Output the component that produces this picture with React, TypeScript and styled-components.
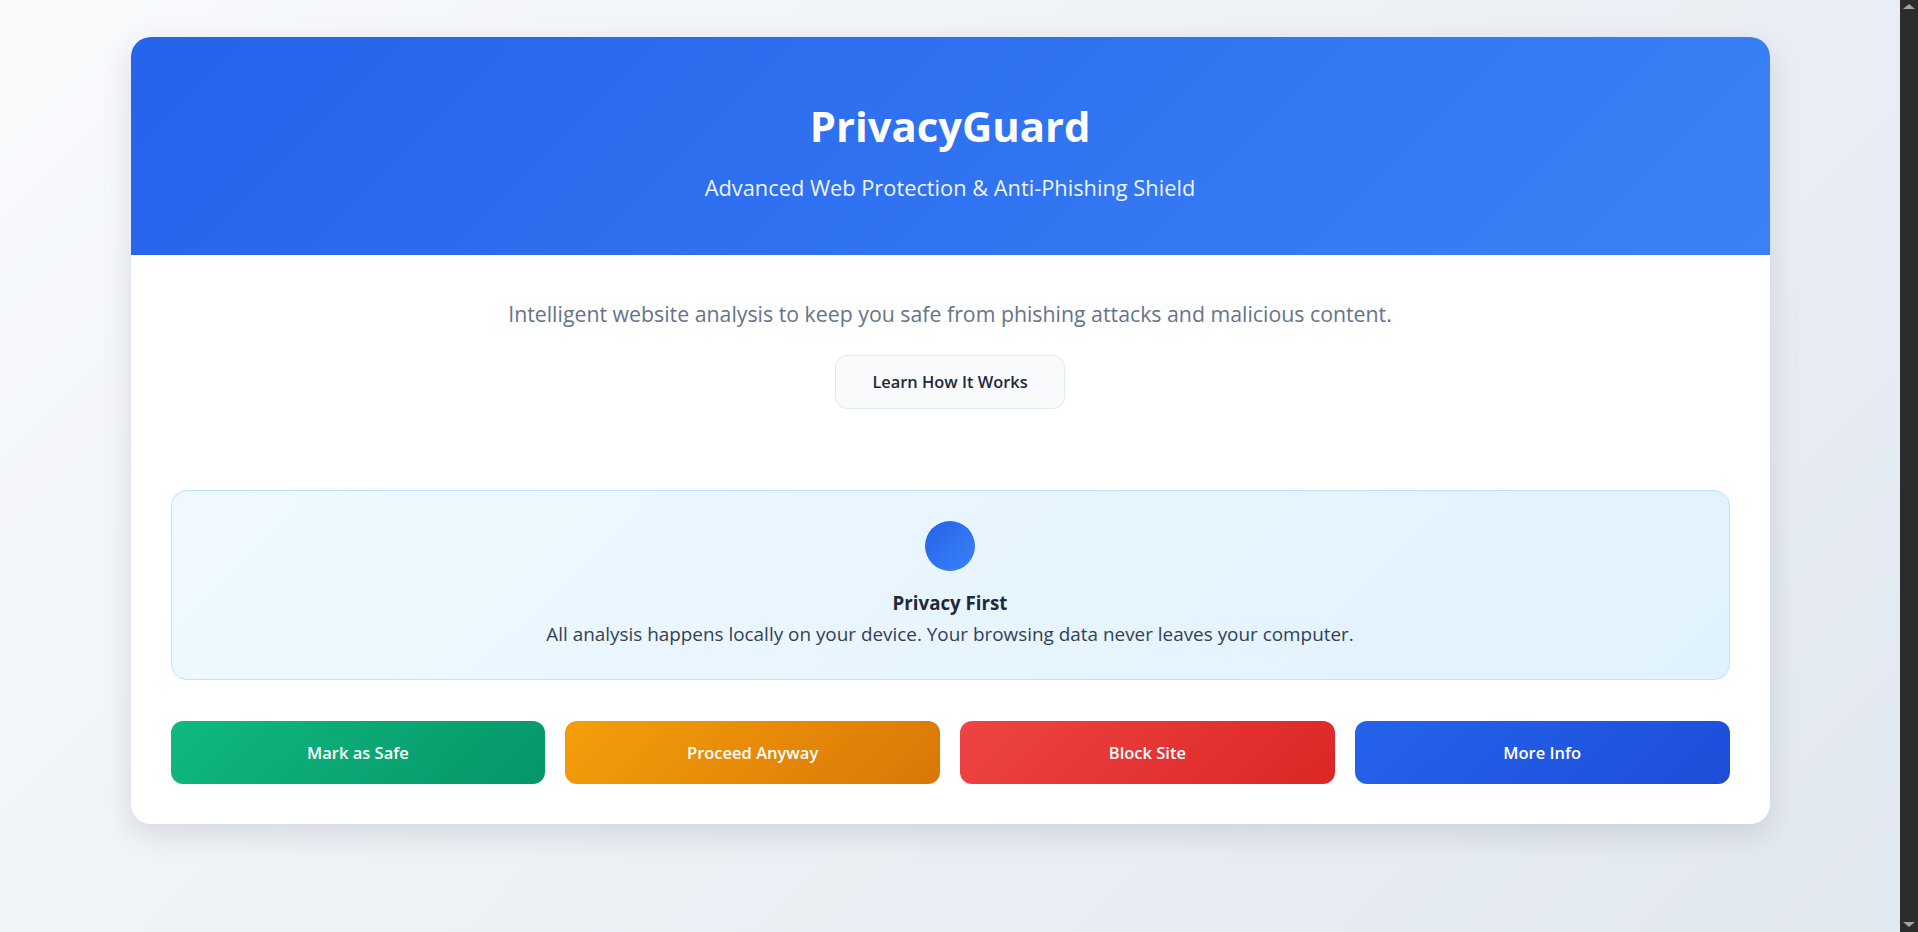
import styled, { createGlobalStyle } from "styled-components";

const GlobalStyle = createGlobalStyle`
  * {
    box-sizing: border-box;
  }
  body {
    margin: 0;
    font-family: "Open Sans", "Noto Sans", sans-serif;
    background: #e2e8f0;
    color: #1e293b;
    overflow: hidden;
  }
`;

const Viewport = styled.div`
  display: flex;
  height: 100vh;
`;

const Page = styled.div`
  flex: 1;
  padding: 37px 0 40px;
  background: linear-gradient(135deg, #f8fafc 0%, #e2e8f0 100%);
`;

// browser scroll lane shown in the reference
const ScrollLane = styled.div`
  width: 18px;
  flex-shrink: 0;
  display: flex;
  flex-direction: column;
  justify-content: space-between;
  align-items: center;
  padding: 4px 0 5px;
  background: #2c2c2c;
`;

const Arrow = styled.span<{ $down?: boolean }>`
  width: 0;
  height: 0;
  border-left: 6px solid transparent;
  border-right: 6px solid transparent;
  ${(p) =>
    p.$down
      ? "border-top: 5px solid #a3a3a3;"
      : "border-bottom: 5px solid #a3a3a3;"}
`;

const Card = styled.main`
  max-width: 1639px;
  margin: 0 auto;
  background: #ffffff;
  border-radius: 20px;
  overflow: hidden;
  box-shadow: 0 10px 30px rgba(15, 23, 42, 0.12);
`;

const Header = styled.header`
  padding: 63.5px 40px 52.5px;
  text-align: center;
  background: linear-gradient(135deg, #2563eb 0%, #3b82f6 100%);
  color: #ffffff;
`;

const Title = styled.h1`
  margin: 0;
  font-size: 41.8px;
  line-height: 50px;
  font-weight: 700;
`;

const Subtitle = styled.p`
  margin: 22px 0 0;
  font-size: 21.8px;
  line-height: 30px;
  font-weight: 400;
  opacity: 0.92;
`;

const Content = styled.section`
  padding: 42.5px 40px 40px;
`;

const Hero = styled.div`
  display: flex;
  flex-direction: column;
  align-items: center;
`;

const Lead = styled.p`
  margin: 0;
  font-size: 21.3px;
  line-height: 32px;
  color: #64748b;
`;

const GhostButton = styled.button`
  margin-top: 25px;
  padding: 15px 36px;
  font-family: inherit;
  font-size: 16.4px;
  line-height: 22px;
  font-weight: 600;
  color: #1e293b;
  background: #f8fafc;
  border: 1px solid #e2e8f0;
  border-radius: 12px;
  cursor: pointer;
`;

const Feature = styled.div`
  margin-top: 81px;
  padding: 30px 40px 32px;
  display: flex;
  flex-direction: column;
  align-items: center;
  text-align: center;
  background: linear-gradient(135deg, #f0f9ff 0%, #e0f2fe 100%);
  border: 1px solid #bae6fd;
  border-radius: 16px;
`;

const FeatureIcon = styled.div`
  width: 50px;
  height: 50px;
  margin-bottom: 19px;
  border-radius: 50%;
  background: linear-gradient(135deg, #2563eb 0%, #3b82f6 100%);
`;

const FeatureTitle = styled.h3`
  margin: 0;
  font-size: 18.7px;
  line-height: 26px;
  font-weight: 700;
  color: #1e293b;
`;

const FeatureText = styled.p`
  margin: 5px 0 0;
  font-size: 18.9px;
  line-height: 26px;
  color: #334155;
`;

const Actions = styled.div`
  margin-top: 41px;
  display: grid;
  grid-template-columns: repeat(4, 1fr);
  gap: 20px;
`;

const tones = {
  safe: "linear-gradient(135deg, #10b981 0%, #059669 100%)",
  proceed: "linear-gradient(135deg, #f59e0b 0%, #d97706 100%)",
  block: "linear-gradient(135deg, #ef4444 0%, #dc2626 100%)",
  info: "linear-gradient(135deg, #2563eb 0%, #1d4ed8 100%)",
};

type Tone = keyof typeof tones;

const ActionButton = styled.button<{ $tone: Tone }>`
  padding: 20px 16px;
  font-family: inherit;
  font-size: 16.5px;
  line-height: 23px;
  font-weight: 600;
  color: #ffffff;
  background: ${(p) => tones[p.$tone]};
  border: none;
  border-radius: 12px;
  cursor: pointer;
`;

const actions: { label: string; tone: Tone }[] = [
  { label: "Mark as Safe", tone: "safe" },
  { label: "Proceed Anyway", tone: "proceed" },
  { label: "Block Site", tone: "block" },
  { label: "More Info", tone: "info" },
];

const App = () => {
  return (
    <>
      <GlobalStyle />
      <Viewport>
        <Page>
          <Card>
            <Header>
              <Title>PrivacyGuard</Title>
              <Subtitle>Advanced Web Protection &amp; Anti-Phishing Shield</Subtitle>
            </Header>
            <Content>
              <Hero>
                <Lead>
                  Intelligent website analysis to keep you safe from phishing attacks and malicious content.
                </Lead>
                <GhostButton>Learn How It Works</GhostButton>
              </Hero>

              <Feature>
                <FeatureIcon />
                <FeatureTitle>Privacy First</FeatureTitle>
                <FeatureText>
                  All analysis happens locally on your device. Your browsing data never leaves your computer.
                </FeatureText>
              </Feature>

              <Actions>
                {actions.map((a) => (
                  <ActionButton key={a.label} $tone={a.tone}>
                    {a.label}
                  </ActionButton>
                ))}
              </Actions>
            </Content>
          </Card>
        </Page>
        <ScrollLane>
          <Arrow />
          <Arrow $down />
        </ScrollLane>
      </Viewport>
    </>
  );
};

export default App;
